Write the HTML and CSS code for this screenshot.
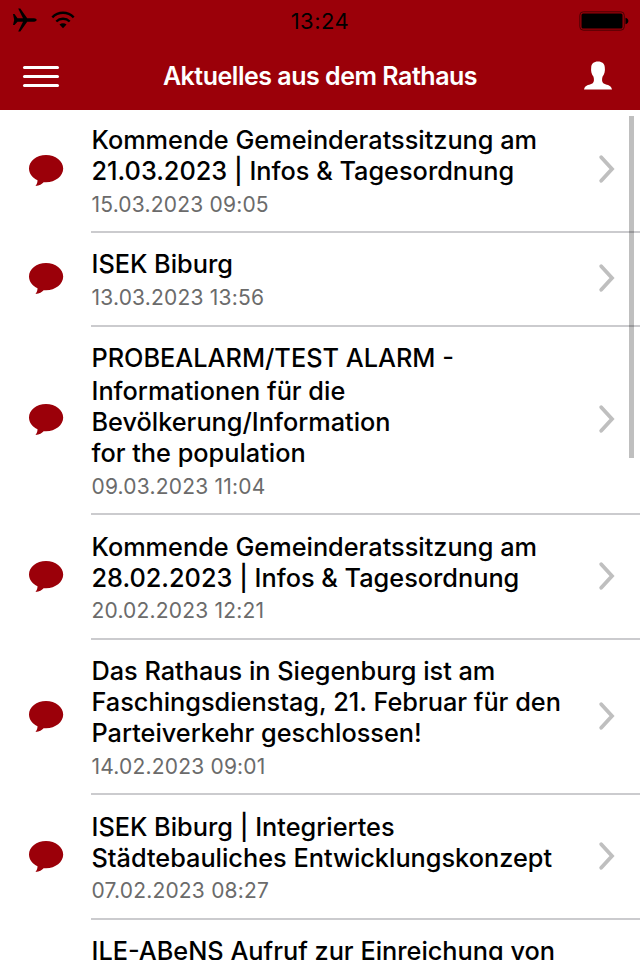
FILE: index.html
```html
<!DOCTYPE html>
<html lang="de">
<head>
    <meta charset="UTF-8">
    <meta name="viewport" content="width=device-width, initial-scale=1.0">
    <title>Aktuelles aus dem Rathaus</title>
    <link rel="stylesheet" href="styles.css">
</head>
<body>
    <!-- Symbole, die mehrfach verwendet werden -->
    <svg class="symbols" aria-hidden="true">
        <symbol id="bubble" viewBox="0 0 36 33">
            <path d="M18 1C8.500 1 1 7 1 14.500C1 19.500 4.200 23.800 9.500 26.300C9.500 28.500 9 30.200 7.500 32C11.500 31.500 14 30 15.600 28.200C16.400 28.300 17.200 28.300 18 28.300C27.500 28.300 35.200 22.200 35.200 14.600C35.200 7 27.500 1 18 1Z"/>
        </symbol>
        <symbol id="chevron" viewBox="0 0 20 30">
            <path d="M3.200 3.200L14 15L3.200 26.800"/>
        </symbol>
    </svg>

    <header>
        <div class="status-bar">
            <div class="status-left">
                <svg class="plane" width="24" height="24" viewBox="0 0 24 24">
                    <path d="M0 6H1.500L4.500 10.300L10 10.200L5.200 0.500H7.300L14.200 10.200L21 10.300C22.500 10.400 23.700 11.200 23.700 12C23.700 12.800 22.500 13.600 21 13.700L14.200 13.800L7.300 23.500H5.200L10 13.800L4.500 13.700L1.500 17H0L1.200 12Z"/>
                </svg>
                <svg class="wifi" width="24" height="18" viewBox="0 0 24 18">
                    <path class="arc" d="M1.300 6.300C7.300 0.300 16.700 0.300 22.700 6.300"/>
                    <path class="arc" d="M5.300 10.500C9 6.900 15 6.900 18.700 10.500"/>
                    <path d="M8.500 13.600C10.500 11.900 13.500 11.900 15.500 13.600L12 17.200Z"/>
                </svg>
            </div>
            <time class="clock">13:24</time>
            <svg class="battery" width="50" height="20" viewBox="0 0 50 20">
                <rect class="case" x="0.800" y="0.800" width="44.500" height="18.400" rx="3.500"/>
                <rect x="2.500" y="2.500" width="41" height="15" rx="1.500"/>
                <path d="M46.500 6.700C48.300 7.300 49.400 8.500 49.400 10S48.300 12.700 46.500 13.300Z"/>
            </svg>
        </div>
        <div class="nav-bar">
            <button class="menu-button" aria-label="Menü">
                <span></span>
                <span></span>
                <span></span>
            </button>
            <h1>Aktuelles aus dem Rathaus</h1>
            <button class="profile-button" aria-label="Profil">
                <svg width="28" height="29" viewBox="0 0 28 29">
                    <path d="M14 0.500C18.200 0.500 20.800 2.800 20.800 6.500C21.300 10 20.500 13 18.500 15.800C17.800 18.500 17.800 21 19.300 22.300C21.500 24.200 27 23.300 28 28.500H0C1 23.300 6.500 24.200 8.700 22.300C10.200 21 10.200 18.500 9.500 15.800C7.500 13 6.700 10 7.200 6.500C7.200 2.800 9.800 0.500 14 0.500Z"/>
                </svg>
            </button>
        </div>
    </header>

    <main>
        <ul class="news-list">
            <li class="news-item">
                <svg class="bubble"><use href="#bubble"/></svg>
                <div class="news-content">
                    <div class="news-text">
                        <h2>Kommende Gemeinderatssitzung am<br>21.03.2023 | Infos &amp; Tagesordnung</h2>
                        <time>15.03.2023 09:05</time>
                    </div>
                    <svg class="chevron"><use href="#chevron"/></svg>
                </div>
            </li>
            <li class="news-item">
                <svg class="bubble"><use href="#bubble"/></svg>
                <div class="news-content">
                    <div class="news-text">
                        <h2>ISEK Biburg</h2>
                        <time>13.03.2023 13:56</time>
                    </div>
                    <svg class="chevron"><use href="#chevron"/></svg>
                </div>
            </li>
            <li class="news-item">
                <svg class="bubble"><use href="#bubble"/></svg>
                <div class="news-content">
                    <div class="news-text">
                        <h2><span class="caps-line">PROBEALARM/TEST ALARM -</span>Informationen für die<br>Bevölkerung/Information<br>for the population</h2>
                        <time>09.03.2023 11:04</time>
                    </div>
                    <svg class="chevron"><use href="#chevron"/></svg>
                </div>
            </li>
            <li class="news-item">
                <svg class="bubble"><use href="#bubble"/></svg>
                <div class="news-content">
                    <div class="news-text">
                        <h2>Kommende Gemeinderatssitzung am<br>28.02.2023 | Infos &amp; Tagesordnung</h2>
                        <time>20.02.2023 12:21</time>
                    </div>
                    <svg class="chevron"><use href="#chevron"/></svg>
                </div>
            </li>
            <li class="news-item">
                <svg class="bubble"><use href="#bubble"/></svg>
                <div class="news-content">
                    <div class="news-text">
                        <h2>Das Rathaus in Siegenburg ist am<br>Faschingsdienstag, 21. Februar für den<br>Parteiverkehr geschlossen!</h2>
                        <time>14.02.2023 09:01</time>
                    </div>
                    <svg class="chevron"><use href="#chevron"/></svg>
                </div>
            </li>
            <li class="news-item">
                <svg class="bubble"><use href="#bubble"/></svg>
                <div class="news-content">
                    <div class="news-text">
                        <h2>ISEK Biburg | Integriertes<br>Städtebauliches Entwicklungskonzept</h2>
                        <time>07.02.2023 08:27</time>
                    </div>
                    <svg class="chevron"><use href="#chevron"/></svg>
                </div>
            </li>
            <li class="news-item">
                <div class="bubble"></div>
                <div class="news-content">
                    <div class="news-text">
                        <h2>ILE-ABeNS Aufruf zur Einreichung von</h2>
                    </div>
                </div>
            </li>
        </ul>
        <div class="scroll-indicator"></div>
    </main>
</body>
</html>
```
FILE: styles.css
```css
:root {
    --primary-color: #9b0009;
    --text-color: #000;
    --date-color: #6b6b6b;
    --line-color: #cbcbce;
    --chevron-color: #bfbfbf;
}

* {
    box-sizing: border-box;
}

body {
    margin: 0;
    height: 100vh;
    display: flex;
    flex-direction: column;
    overflow: hidden;
    background-color: white;
    color: var(--text-color);
    font-family: Inter, "Liberation Sans", sans-serif;
}

.symbols {
    display: none;
}

header {
    flex: none;
    height: 110px;
    background-color: var(--primary-color);
}

.status-bar {
    display: grid;
    grid-template-columns: 1fr auto 1fr;
    align-items: center;
    height: 40px;
    padding: 0 11px 0 13px;
}

.status-left {
    display: flex;
    align-items: center;
    gap: 14px;
}

.plane,
.wifi {
    margin-bottom: 2px;
}

.arc {
    fill: none;
    stroke: black;
    stroke-width: 2.4;
}

.clock {
    margin-right: 2px;
    font-size: 22px;
    line-height: 42px;
    letter-spacing: 0.5px;
}

.battery {
    justify-self: end;
}

.battery .case {
    fill: none;
    stroke: #4a0004;
    stroke-width: 1;
}

.nav-bar {
    display: grid;
    grid-template-columns: 80px 1fr 75px;
    align-items: center;
    height: 72px;
    padding: 0 28px 0 23px;
}

.nav-bar button {
    padding: 0;
    border: none;
    background: none;
}

.menu-button {
    display: flex;
    flex-direction: column;
    gap: 6px;
    width: 36px;
}

.menu-button span {
    height: 3px;
    border-radius: 2px;
    background-color: white;
}

h1 {
    margin: 0;
    color: white;
    font-size: 25px;
    font-weight: 600;
    line-height: 72px;
    letter-spacing: -0.48px;
    text-align: center;
    white-space: nowrap;
}

.profile-button {
    justify-self: end;
    height: 29px;
    margin-bottom: 1px;
}

.profile-button svg {
    display: block;
    fill: white;
}

main {
    position: relative;
    flex: 1;
    min-height: 0;
    overflow: hidden;
}

.news-list {
    margin: 0;
    padding: 0;
    list-style: none;
}

.news-item {
    display: flex;
    align-items: center;
    padding-left: 27.800px;
}

.bubble {
    flex: none;
    width: 36px;
    height: 33px;
    margin-right: 27.200px;
    margin-bottom: 2px;
    fill: var(--primary-color);
}

.news-content {
    flex: 1;
    display: flex;
    align-items: center;
    padding-right: 22px;
    border-bottom: 2px solid var(--line-color);
}

.news-text {
    flex: 1;
    padding: 15.200px 0 13.500px 0.500px;
}

.news-item:first-child .news-text {
    padding-top: 14px;
}

h2 {
    margin: 0;
    font-size: 25.300px;
    font-weight: 450;
    line-height: 31.100px;
    white-space: nowrap;
}

.caps-line {
    display: block;
    margin-bottom: 2px;
}

.news-text time {
    display: block;
    margin-top: 5.600px;
    color: var(--date-color);
    font-size: 21px;
    line-height: 26px;
    letter-spacing: 0.2px;
}

.chevron {
    flex: none;
    width: 20px;
    height: 30px;
    margin-bottom: 1px;
    fill: none;
    stroke: var(--chevron-color);
    stroke-width: 3.8;
    stroke-linecap: round;
}

.news-item:first-child .bubble,
.news-item:first-child .chevron {
    margin-bottom: 3px;
}

.scroll-indicator {
    position: absolute;
    top: 6px;
    right: 6px;
    width: 5px;
    height: 342px;
    background-color: rgba(0, 0, 0, 0.25);
}
```
